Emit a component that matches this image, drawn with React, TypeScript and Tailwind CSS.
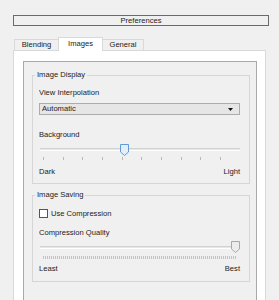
import React from "react";

function Thumb({ blue }: { blue?: boolean }) {
  return (
    <svg width="9" height="12" viewBox="0 0 9 12" className="block">
      <path
        d="M0.5 0.5 H8.5 V8 L4.5 11.5 L0.5 8 Z"
        fill={blue ? "#e3eefa" : "#ececec"}
        stroke={blue ? "#5f9bd6" : "#a8a8a8"}
        strokeWidth="1"
      />
    </svg>
  );
}

export default function App() {
  const fewTicks = Array.from({ length: 10 });
  const manyTicks = Array.from({ length: 97 });
  return (
    <div className="w-[279px] h-[300px] overflow-hidden bg-[#f0f0f0] text-[7.6px] leading-[10px] text-[#222] font-['Liberation_Sans',Arial,sans-serif]">
      <div className="pt-[15px]">
        <div className="ml-[13px] w-[256px] h-[11px] border border-[#6a6a6a] flex items-center justify-center">
          Preferences
        </div>
      </div>

      <div className="mt-[11px] ml-[14px] h-[13px] flex items-end relative z-10">
        <div className="w-[44px] h-[11px] border-l border-t border-[#d9d9d9] flex items-center justify-center">
          Blending
        </div>
        <div className="w-[45px] h-[14px] -mb-[1px] border-l border-r border-t border-[#d9d9d9] bg-white flex items-center justify-center pb-[1px]">
          Images
        </div>
        <div className="w-[41px] h-[11px] border-r border-t border-[#d9d9d9] flex items-center justify-center">
          General
        </div>
      </div>

      <div className="ml-[13px] w-[253px] h-[260px] bg-white border border-[#d9d9d9] pt-[10px] pl-[9px]">
        <div className="w-[234px] h-[260px] border border-[#a9a9a9] bg-[#f0f0f0] pt-[8px] pl-[8px]">
          {/* Image Display */}
          <fieldset className="w-[218px] border border-[#d6d6d6] p-0 m-0">
            <legend className="ml-[2px] px-[2px] leading-[10px]">Image Display</legend>
            <div className="px-[6px] pb-[6px]">
              <div className="mt-[8px]">View Interpolation</div>
              <div className="mt-[5px] w-[201px] h-[12px] border border-[#acacac] bg-[#e6e6e6] flex items-center justify-between pl-[2px] pr-[6px]">
                <span>Automatic</span>
                <svg width="5" height="3" viewBox="0 0 5 3" className="block">
                  <path d="M0 0 H5 L2.5 3 Z" fill="#111" />
                </svg>
              </div>
              <div className="mt-[15px]">Background</div>
              <div className="mt-[4px] relative h-[17px] w-[203px]">
                <div className="absolute left-[1px] top-[4px] w-[200px] h-[3px] border-t border-[#d2d2d2] border-b border-b-white bg-[#e6e6e6]" />
                <div className="absolute left-[4px] top-[13px] w-[178px] h-[3px] flex justify-between">
                  {fewTicks.map((_, i) => (
                    <div key={i} className="w-[1px] h-[3px] bg-[#b8b8b8]" />
                  ))}
                </div>
                <div className="absolute left-[81px] top-0">
                  <Thumb blue />
                </div>
              </div>
              <div className="mt-[6px] w-[201px] flex justify-between">
                <span>Dark</span>
                <span>Light</span>
              </div>
            </div>
          </fieldset>

          {/* Image Saving */}
          <fieldset className="mt-[6px] w-[218px] border border-[#d6d6d6] p-0 m-0">
            <legend className="ml-[2px] px-[2px] leading-[10px]">Image Saving</legend>
            <div className="px-[6px] pb-[7px]">
              <div className="mt-[9px] flex items-center h-[9px]">
                <div className="w-[9px] h-[9px] border border-[#555] bg-white" />
                <span className="ml-[3px]">Use Compression</span>
              </div>
              <div className="mt-[10px]">Compression Quality</div>
              <div className="mt-[3px] relative h-[18px] w-[203px]">
                <div className="absolute left-[1px] top-[5px] w-[200px] h-[3px] border-t border-[#d2d2d2] border-b border-b-white bg-[#e6e6e6]" />
                <div className="absolute left-[4px] top-[15px] w-[194px] h-[3px] flex justify-between">
                  {manyTicks.map((_, i) => (
                    <div key={i} className="w-[1px] h-[3px] bg-[#c2c2c2]" />
                  ))}
                </div>
                <div className="absolute left-[192px] top-0">
                  <Thumb />
                </div>
              </div>
              <div className="mt-[5px] w-[201px] flex justify-between">
                <span>Least</span>
                <span>Best</span>
              </div>
            </div>
          </fieldset>
        </div>
      </div>
    </div>
  );
}
